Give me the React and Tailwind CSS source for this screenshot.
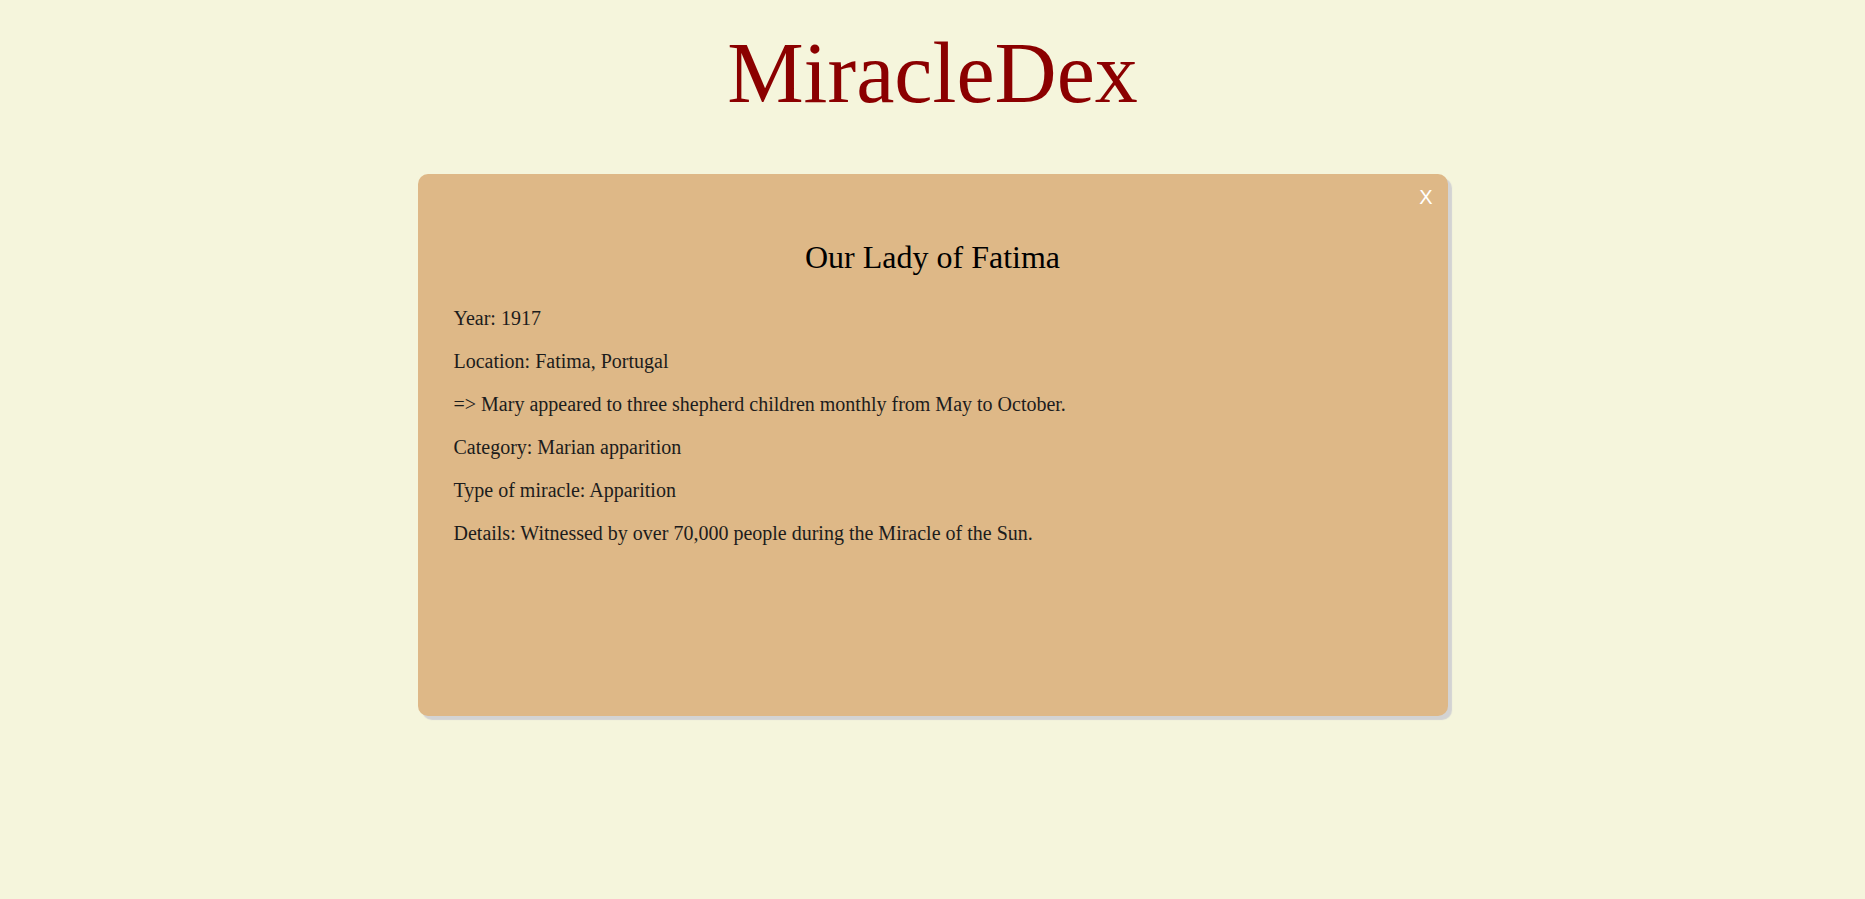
export default function App() {
  const rows = [
    "Year: 1917",
    "Location: Fatima, Portugal",
    "=> Mary appeared to three shepherd children monthly from May to October.",
    "Category: Marian apparition",
    "Type of miracle: Apparition",
    "Details: Witnessed by over 70,000 people during the Miracle of the Sun.",
  ];
  return (
    <div
      className="min-h-screen bg-[#f5f5dc] pt-[30px]"
      style={{ fontFamily: '"Liberation Serif", "Times New Roman", serif' }}
    >
      <h1 className="text-center text-[86px] leading-[87px] text-[#8b0000]">MiracleDex</h1>
      <div className="relative mx-auto mt-[57px] h-[542px] w-[1030px] rounded-[10px] bg-[#deb887] px-[36px] pt-[67px] shadow-[4px_4px_1px_#d3d3d3]">
        <button
          className="absolute right-[15px] top-[13px] text-[20px] leading-[20px] text-white"
          style={{ fontFamily: '"Liberation Sans", Arial, sans-serif' }}
        >
          X
        </button>
        <h2 className="text-center text-[32px] leading-[32px] text-black">Our Lady of Fatima</h2>
        <div className="mt-[33px] flex flex-col gap-[18px]">
          {rows.map((r) => (
            <p key={r} className="text-[20px] leading-[25px] text-[#1c1c1c]">
              {r}
            </p>
          ))}
        </div>
      </div>
    </div>
  );
}
